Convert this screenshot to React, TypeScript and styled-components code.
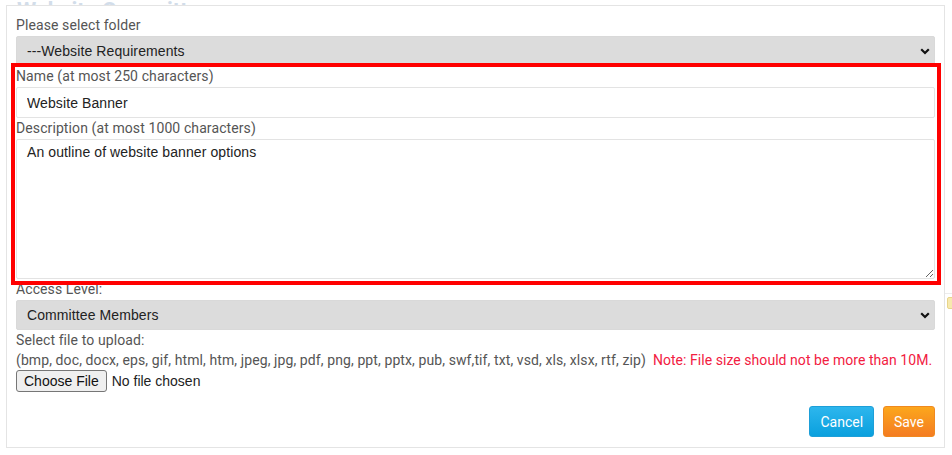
import React from "react";
import styled, { createGlobalStyle } from "styled-components";

const GlobalStyle = createGlobalStyle`
  html, body { margin: 0; padding: 0; background: #ffffff; }
  body { overflow: hidden; font-family: Roboto, "Liberation Sans", Arial, sans-serif; }
  * { box-sizing: border-box; }
`;

const Page = styled.div`
  position: relative;
  width: 952px;
  height: 455px;
  overflow: hidden;
  background: #ffffff;
`;

const PageTitle = styled.h1`
  margin: 0;
  padding-left: 17px;
  font-family: Roboto, "Liberation Sans", sans-serif;
  font-weight: 700;
  font-size: 22px;
  line-height: 1;
  color: #d2ddea;
`;

const SideRule = styled.div`
  position: absolute;
  left: 945px;
  top: 293px;
  width: 7px;
  height: 1px;
  background: #ececec;
`;

const SideIcon = styled.div`
  position: absolute;
  left: 947px;
  top: 297px;
  width: 10px;
  height: 12px;
  border-radius: 2px;
  background: #f7e9ae;
  border: 1px solid #e8d58a;
`;

const Modal = styled.div`
  position: absolute;
  top: 5px;
  left: 6px;
  width: 939px;
  height: 443px;
  background: #ffffff;
  border: 1px solid #e4e4e4;
  padding: 9px 9px 10px 9px;
  display: flex;
  flex-direction: column;
`;

const Field = styled.div`
  display: flex;
  flex-direction: column;
  gap: 1px;
`;

const Label = styled.label`
  display: block;
  font-family: Roboto, "Liberation Sans", sans-serif;
  font-size: 14px;
  letter-spacing: 0.1px;
  line-height: 20px;
  color: #555555;
  white-space: nowrap;
`;

const SelectWrap = styled.div`
  position: relative;
  height: 30px;
`;

const Select = styled.select`
  appearance: none;
  -webkit-appearance: none;
  width: 100%;
  height: 30px;
  border: 1px solid #d9d9d9;
  border-radius: 2px;
  background: #dcdcdc;
  padding: 0 10px;
  font-family: "Liberation Sans", Arial, sans-serif;
  font-size: 14px;
  letter-spacing: 0.1px;
  color: #222222;
  outline: none;
`;

const Chevron = styled.svg`
  position: absolute;
  right: 5px;
  top: 12px;
  width: 10px;
  height: 7px;
  pointer-events: none;
`;

const TextInput = styled.input`
  width: 100%;
  height: 31px;
  border: 1px solid #e3e3e3;
  border-radius: 2px;
  padding: 0 10px;
  font-family: "Liberation Sans", Arial, sans-serif;
  font-size: 14px;
  letter-spacing: 0.1px;
  color: #222222;
  background: #ffffff;
  outline: none;
`;

const TextArea = styled.textarea`
  width: 100%;
  height: 140px;
  border: 1px solid #e3e3e3;
  border-radius: 2px;
  padding: 4px 10px;
  font-family: "Liberation Sans", Arial, sans-serif;
  font-size: 14px;
  letter-spacing: 0.1px;
  line-height: 16px;
  color: #222222;
  background: #ffffff;
  resize: vertical;
  outline: none;
`;

const InfoLine = styled.div`
  font-family: Roboto, "Liberation Sans", sans-serif;
  font-size: 14px;
  letter-spacing: 0.1px;
  line-height: 20px;
  color: #555555;
  white-space: nowrap;
`;

const Note = styled.span`
  color: #f2203f;
  margin-left: 7px;
  letter-spacing: 0.05px;
`;

const FileRow = styled.div`
  display: flex;
  align-items: center;
  gap: 5px;
  height: 22px;
`;

const FileButton = styled.button`
  height: 22px;
  padding: 0 7px;
  border: 1px solid #767676;
  border-radius: 3px;
  background: #efefef;
  font-family: "Liberation Sans", Arial, sans-serif;
  font-size: 14px;
  color: #111111;
  line-height: 20px;
`;

const FileStatus = styled.span`
  font-family: "Liberation Sans", Arial, sans-serif;
  font-size: 14px;
  color: #222222;
`;

const Spacer = styled.div`
  flex: 1;
`;

const Footer = styled.div`
  display: flex;
  justify-content: flex-end;
  gap: 9px;
`;

const ActionButton = styled.button<{ $variant: "cancel" | "save" }>`
  height: 31px;
  padding: 0 10px;
  border-radius: 3px;
  border: 1px solid ${(p) => (p.$variant === "cancel" ? "#1d9fd8" : "#f0891f")};
  background: ${(p) =>
    p.$variant === "cancel"
      ? "linear-gradient(#2db6ed, #0aa0de)"
      : "linear-gradient(#fca71c, #f47c22)"};
  color: #ffffff;
  font-family: Roboto, "Liberation Sans", sans-serif;
  font-size: 14px;
  cursor: pointer;
`;

const Annotation = styled.div`
  position: absolute;
  left: 11px;
  top: 63px;
  width: 930px;
  height: 222px;
  border: 4px solid #ff0000;
  pointer-events: none;
`;

const ChevronIcon = () => (
  <Chevron viewBox="0 0 10 7">
    <polyline points="1.2,1.2 5,5 8.8,1.2" fill="none" stroke="#111" strokeWidth="2.2" />
  </Chevron>
);

export default function App() {
  return (
    <Page>
      <GlobalStyle />
      <PageTitle>Website Committee</PageTitle>
      <SideRule />
      <SideIcon />
      <Modal>
        <Field>
          <Label>Please select folder</Label>
          <SelectWrap>
            <Select defaultValue="req">
              <option value="req">---Website Requirements</option>
            </Select>
            <ChevronIcon />
          </SelectWrap>
        </Field>
        <Field>
          <Label>Name (at most 250 characters)</Label>
          <TextInput defaultValue="Website Banner" />
        </Field>
        <Field>
          <Label>Description (at most 1000 characters)</Label>
          <TextArea defaultValue="An outline of website banner options" />
        </Field>
        <Field>
          <Label>Access Level:</Label>
          <SelectWrap>
            <Select defaultValue="cm">
              <option value="cm">Committee Members</option>
            </Select>
            <ChevronIcon />
          </SelectWrap>
        </Field>
        <InfoLine>Select file to upload:</InfoLine>
        <InfoLine>
          (bmp, doc, docx, eps, gif, html, htm, jpeg, jpg, pdf, png, ppt, pptx, pub, swf,tif, txt, vsd, xls, xlsx, rtf, zip)
          <Note>Note: File size should not be more than 10M.</Note>
        </InfoLine>
        <FileRow>
          <FileButton type="button">Choose File</FileButton>
          <FileStatus>No file chosen</FileStatus>
        </FileRow>
        <Spacer />
        <Footer>
          <ActionButton $variant="cancel" type="button">Cancel</ActionButton>
          <ActionButton $variant="save" type="button">Save</ActionButton>
        </Footer>
      </Modal>
      <Annotation />
    </Page>
  );
}
